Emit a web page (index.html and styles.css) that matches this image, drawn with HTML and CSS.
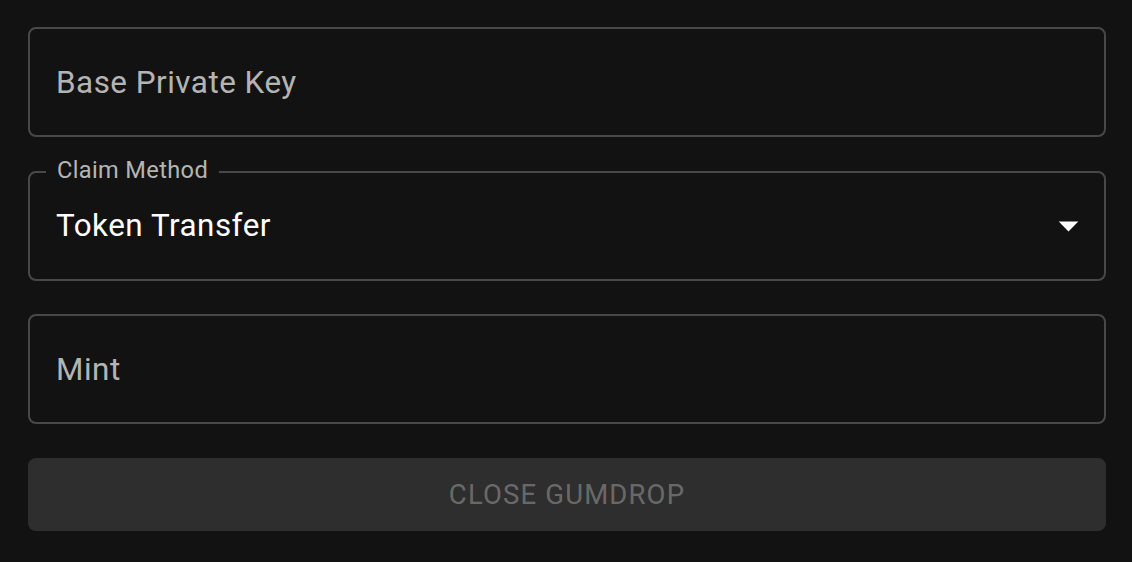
FILE: index.html
```html
<!DOCTYPE html>
<html lang="en">
<head>
<meta charset="utf-8">
<title>Close Gumdrop</title>
<link rel="stylesheet" href="styles.css">
</head>
<body>
<form class="form">
  <div class="field">
    <span class="placeholder">Base Private Key</span>
  </div>
  <div class="field">
    <span class="notch-label">Claim Method</span>
    <span class="value">Token Transfer</span>
    <svg class="arrow" viewBox="0 0 24 24" width="47" height="47" aria-hidden="true"><path d="M7 10l5 5 5-5z" fill="#ffffff"/></svg>
  </div>
  <div class="field">
    <span class="placeholder">Mint</span>
  </div>
  <button type="button" class="btn" disabled>Close Gumdrop</button>
</form>
</body>
</html>
```

FILE: styles.css
```css
html, body {
  margin: 0;
  padding: 0;
  background: #121212;
}

body {
  font-family: Roboto, "Liberation Sans", Arial, sans-serif;
  width: 1132px;
  height: 562px;
  overflow: hidden;
}

.form {
  display: flex;
  flex-direction: column;
  padding: 27px 26px 0 28px;
}

.field {
  position: relative;
  box-sizing: border-box;
  height: 110px;
  margin-bottom: 33.5px;
  padding: 0 26px;
  border: 2px solid rgba(255, 255, 255, 0.23);
  border-radius: 8px;
  display: flex;
  align-items: center;
}

.placeholder,
.value {
  font-size: 31.4px;
  line-height: 45px;
  letter-spacing: 0.016em;
}

.placeholder {
  color: rgba(255, 255, 255, 0.7);
}

.value {
  color: #ffffff;
}

.notch-label {
  position: absolute;
  top: -14px;
  left: 16px;
  padding: 0 11px;
  background: #121212;
  color: rgba(255, 255, 255, 0.7);
  font-size: 23.6px;
  line-height: 1;
  letter-spacing: 0.015em;
}

.arrow {
  position: absolute;
  right: 12px;
  top: calc(50% - 23.5px);
}

.btn {
  box-sizing: border-box;
  height: 73px;
  width: 100%;
  border: 0;
  border-radius: 8px;
  background: rgba(255, 255, 255, 0.12);
  color: rgba(255, 255, 255, 0.3);
  font-family: Roboto, "Liberation Sans", Arial, sans-serif;
  font-size: 27.5px;
  font-weight: 400;
  letter-spacing: 1.15px;
  text-transform: uppercase;
  display: flex;
  align-items: center;
  justify-content: center;
  padding: 0;
}
```
